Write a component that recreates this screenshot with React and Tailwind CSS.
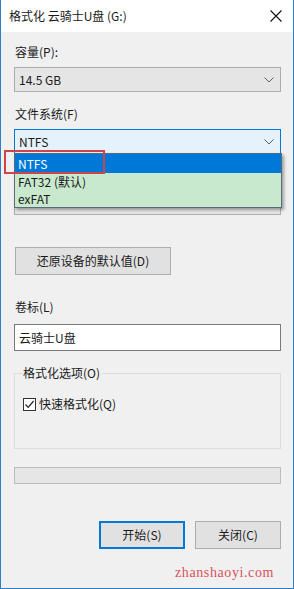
import React from "react";

const Chevron = () => (
  <svg width="10" height="6" viewBox="0 0 10 6" className="shrink-0">
    <path d="M0.5 0.5 L5 5 L9.5 0.5" fill="none" stroke="#606060" strokeWidth="1" />
  </svg>
);

export default function App() {
  const font = { fontFamily: '"Noto Sans CJK SC", "Noto Sans", sans-serif' };
  return (
    <div
      className="relative w-[294px] h-[589px] bg-[#f0f0f0] border-x border-b border-[#2f7fc8] text-[12px] text-[#1a1a1a] overflow-hidden"
      style={font}
    >
      {/* Title bar */}
      <div className="h-[32px] bg-white flex items-center justify-between pl-[8px] pr-[11px]">
        <span className="leading-[16px]">格式化 云骑士U盘 (G:)</span>
        <svg width="12" height="12" viewBox="0 0 12 12">
          <path d="M0.5 0.5 L11.5 11.5 M11.5 0.5 L0.5 11.5" stroke="#111" strokeWidth="1.1" />
        </svg>
      </div>

      <div className="flex flex-col pl-[13px] pr-[12px]">
        <div className="mt-[12px] leading-[16px] pl-[1px]">容量(P):</div>
        <div className="mt-[7px] h-[25px] bg-[#e5e5e5] border border-[#adadad] flex items-center justify-between pl-[4px] pr-[6px]">
          <span className="leading-[16px]">14.5 GB</span>
          <Chevron />
        </div>

        <div className="mt-[14px] leading-[16px] pl-[1px]">文件系统(F)</div>
        <div className="mt-[7px] h-[25px] bg-[#e5f1fb] border border-[#0078d7] flex items-center justify-between pl-[4px] pr-[6px]">
          <span className="leading-[16px]">NTFS</span>
          <Chevron />
        </div>

        {/* hidden row under the dropdown */}
        <div className="mt-[14px] h-[16px]" />
        <div className="mt-[6px] h-[25px] bg-[#e5e5e5] border border-[#adadad] flex items-center justify-end pr-[6px]">
          <Chevron />
        </div>

        <div className="mt-[32px] ml-[1px] w-[156px] h-[28px] bg-[#e1e1e1] border border-[#adadad] flex items-center justify-center">
          <span className="leading-[16px]">还原设备的默认值(D)</span>
        </div>

        <div className="mt-[24px] leading-[16px] pl-[1px]">卷标(L)</div>
        <div className="mt-[9px] h-[27px] bg-white border border-[#7a7a7a] flex items-center pl-[4px]">
          <span className="leading-[16px]">云骑士U盘</span>
        </div>

        <div className="relative mt-[22px] h-[76px] border border-[#dcdcdc]">
          <div className="absolute left-[8px] top-[-9px] bg-[#f0f0f0] pr-[2px] leading-[16px]">格式化选项(O)</div>
          <div className="mt-[22px] ml-[8px] flex items-center gap-[3px]">
            <div className="w-[13px] h-[13px] bg-white border border-[#333] flex items-center justify-center">
              <svg width="11" height="11" viewBox="0 0 11 11">
                <path d="M1.5 5.5 L4.2 8.3 L9.6 2" fill="none" stroke="#222" strokeWidth="1.2" />
              </svg>
            </div>
            <span className="leading-[16px]">快速格式化(Q)</span>
          </div>
        </div>

        <div className="mt-[18px] h-[17px] bg-[#e6e6e6] border border-[#bcbcbc]" />

        <div className="mt-[37px] flex justify-end gap-[10px]">
          <div className="w-[86px] h-[28px] bg-[#e1e1e1] border-2 border-[#0078d7] flex items-center justify-center">
            <span className="leading-[16px]">开始(S)</span>
          </div>
          <div className="w-[86px] h-[28px] bg-[#e1e1e1] border border-[#adadad] flex items-center justify-center">
            <span className="leading-[16px]">关闭(C)</span>
          </div>
        </div>

        <div className="mt-[15px] flex justify-end pr-[7px]">
          <span
            className="text-[14px] leading-[18px] tracking-[0.6px] text-[#d9515a]"
            style={{ fontFamily: '"Liberation Serif", serif' }}
          >
            zhanshaoyi.com
          </span>
        </div>
      </div>

      {/* Dropdown list */}
      <div className="absolute left-[13px] top-[153px] w-[268px] h-[55px] bg-[#c8e9cd] border border-[#5a6a78] shadow-[2px_2px_3px_rgba(0,0,0,0.35)] flex flex-col">
        <div className="h-[19px] bg-[#0078d7] text-white flex items-center pl-[3px]">
          <span className="leading-[16px]">NTFS</span>
        </div>
        <div className="h-[17px] flex items-center pl-[3px]">
          <span className="leading-[16px]">FAT32 (默认)</span>
        </div>
        <div className="h-[17px] flex items-center pl-[3px]">
          <span className="leading-[16px]">exFAT</span>
        </div>
      </div>

      {/* Red highlight */}
      <div className="absolute left-[3px] top-[150px] w-[101px] h-[24px] border-2 border-[#c9474b]" />
    </div>
  );
}
